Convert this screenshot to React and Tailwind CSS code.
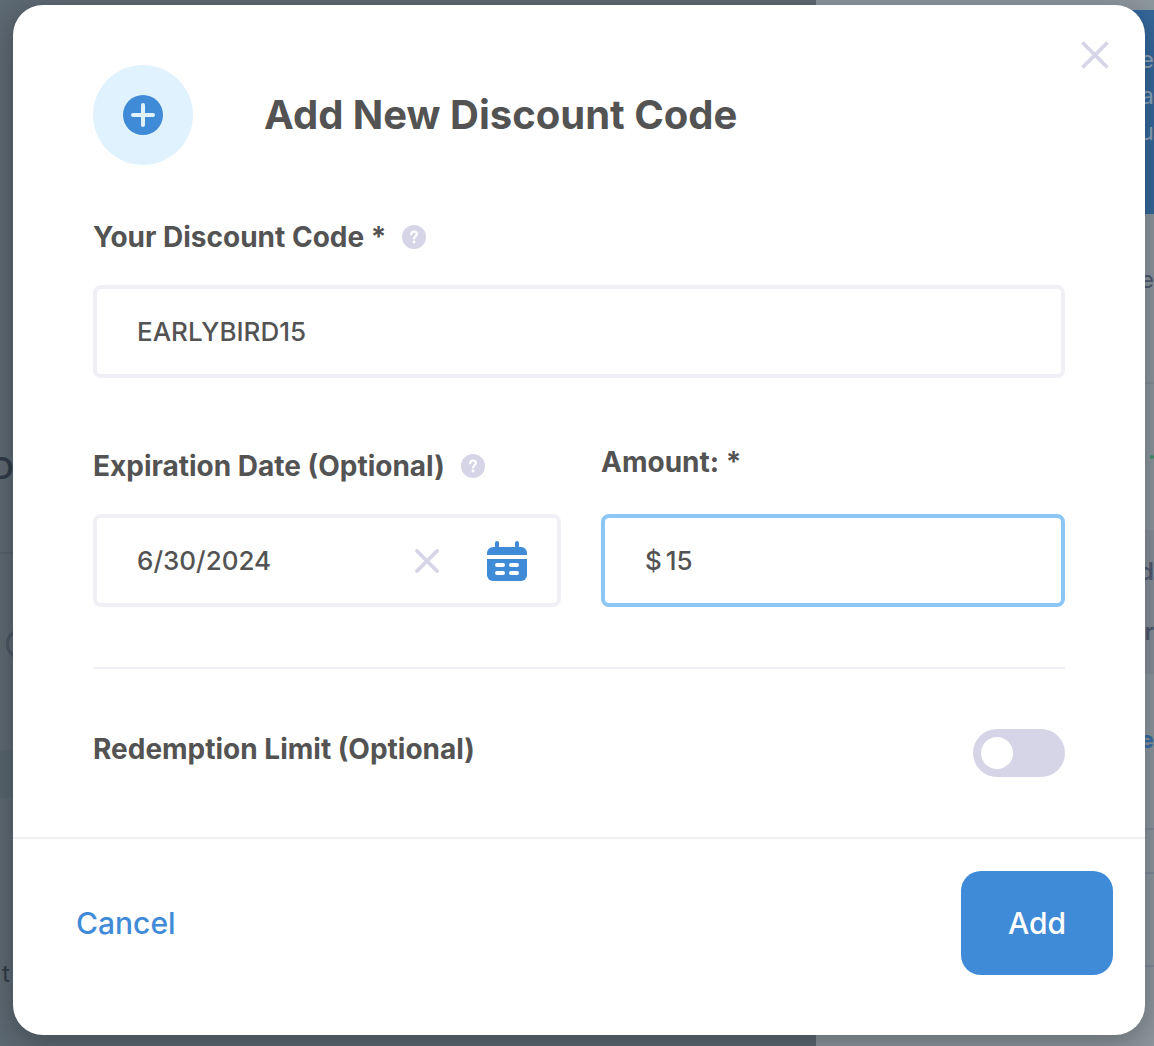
import React, { useState } from "react";

function HelpIcon({ label }) {
  return (
    <button type="button" aria-label={label} className="flex shrink-0 cursor-pointer">
      <svg width="24" height="24" viewBox="0 0 24 24" fill="none">
        <circle cx="12" cy="12" r="12" fill="#d5d5e7" />
        <path
          d="M9.2 9.2C9.400 7.400 10.500 6.500 12 6.500c1.700 0 2.900 1 2.900 2.600 0 2-2.800 2.300-2.800 4.400"
          stroke="#fff"
          strokeWidth="2.200"
          strokeLinecap="round"
        />
        <circle cx="12" cy="17" r="1.400" fill="#fff" />
      </svg>
    </button>
  );
}

function PlusIcon() {
  return (
    <svg width="40" height="40" viewBox="0 0 40 40">
      <circle cx="20" cy="20" r="20" fill="#3f8bd8" />
      <path d="M20 10v20M10 20h20" stroke="#e1f2ff" strokeWidth="4" strokeLinecap="round" />
    </svg>
  );
}

function CalendarIcon() {
  return (
    <svg width="40" height="40" viewBox="0 0 40 40">
      <path d="M10 2v6M30 2v6" stroke="#3f8bd8" strokeWidth="4" strokeLinecap="round" />
      <path d="M6 6h28a6 6 0 0 1 6 6v2H0v-2a6 6 0 0 1 6-6z" fill="#3f8bd8" />
      <path d="M0 18h40v16a6 6 0 0 1-6 6H6a6 6 0 0 1-6-6z" fill="#3f8bd8" />
      <path
        d="M10 24h6M24 24h6M10 32h6M24 32h6"
        stroke="#fff"
        strokeWidth="4"
        strokeLinecap="round"
      />
    </svg>
  );
}

function PageBehind() {
  return (
    <div
      aria-hidden="true"
      className="grid min-h-screen grid-cols-[816fr_338fr] overflow-hidden text-2xl"
    >
      <div className="flex flex-col bg-[#5d6973] text-[#303c49]">
        <div className="h-[452px]" />
        <div className="-ml-2 h-[100px] text-3xl leading-8 font-semibold">D</div>
        <div className="h-[76px] border-t-2 border-[#56616c]" />
        <div className="ml-1.5 size-8 rounded-full border-3 border-[#4a5763]" />
        <div className="mt-[90px] h-12 bg-[#59666f]" />
        <div className="mt-40 ml-0.5 leading-8">t</div>
      </div>
      <div className="flex flex-col bg-[#8d979e] text-[#505a70]">
        <div className="mt-2.5 h-[204px] bg-[#35689c] pt-8 text-right leading-9 text-[#8da3b8]">
          <p>e</p>
          <p>ra</p>
          <p>u</p>
        </div>
        <p className="h-[168px] pt-12 text-right leading-9">e</p>
        <div className="flex h-[148px] items-center justify-end border-t-2 border-[#858e99]">
          <span className="h-1 w-1 rounded-full bg-[#40936a]" />
        </div>
        <div className="h-36 bg-[#888f9a] pt-6 text-right leading-9 font-semibold">
          <p>d</p>
          <p className="mt-6">r</p>
        </div>
        <p className="h-[154px] pt-12 text-right leading-9 font-bold text-[#3a6fa5]">e</p>
        <div className="h-11 border-t-2 border-[#7f8b99]" />
        <div className="h-[93px] border-t-2 border-[#7f8b99]" />
        <div className="border-t-2 border-[#7f8b99]" />
      </div>
    </div>
  );
}

export default function App() {
  const [code, setCode] = useState("EARLYBIRD15");
  const [date, setDate] = useState("6/30/2024");
  const [amount, setAmount] = useState("15");
  const [limited, setLimited] = useState(false);

  return (
    <div className="relative font-['Inter',sans-serif] text-[#535353]">
      <PageBehind />
      <div className="absolute inset-0 pt-[5px] pr-[9px] pb-[11px] pl-[13px]">
        <form
          role="dialog"
          aria-labelledby="dialog-title"
          onSubmit={(e) => e.preventDefault()}
          className="relative rounded-[30px] bg-white shadow-[0_8px_32px_rgba(0,0,0,0.3)]"
        >
          <button
            type="button"
            aria-label="Close"
            className="absolute top-9 right-9 cursor-pointer"
          >
            <svg width="28" height="28" viewBox="0 0 28 28">
              <path d="M1.500 1.500l25 25M26.500 1.500l-25 25" stroke="#d5d5e7" strokeWidth="3.800" />
            </svg>
          </button>

          <div className="px-20 pt-15 pb-15">
            <div className="flex items-center gap-[71px]">
              <div className="flex size-25 shrink-0 items-center justify-center rounded-full bg-[#e1f2ff]">
                <PlusIcon />
              </div>
              <h1 id="dialog-title" className="text-[40px] leading-12 font-bold">
                Add New Discount Code
              </h1>
            </div>

            <div className="mt-14 flex h-8 items-center gap-4 text-[28px] leading-8 font-bold">
              <label htmlFor="code">Your Discount Code *</label>
              <HelpIcon label="About discount codes" />
            </div>
            <input
              id="code"
              type="text"
              value={code}
              onChange={(e) => setCode(e.target.value)}
              className="mt-8 block h-[93px] w-full rounded-lg border-4 border-[#efeff5] px-10 text-[26px] font-medium outline-none"
            />

            <div className="mt-18 grid grid-cols-[468fr_464fr] gap-10">
              <div>
                <div className="flex h-8 items-center gap-4 text-[28px] leading-8 font-bold">
                  <label htmlFor="date">Expiration Date (Optional)</label>
                  <HelpIcon label="About expiration dates" />
                </div>
                <div className="mt-8 flex h-[93px] items-center rounded-lg border-4 border-[#efeff5] pr-[30px] pl-10">
                  <input
                    id="date"
                    type="text"
                    value={date}
                    onChange={(e) => setDate(e.target.value)}
                    className="w-full min-w-0 text-[26px] font-medium outline-none"
                  />
                  <button
                    type="button"
                    aria-label="Clear date"
                    onClick={() => setDate("")}
                    className="mr-12 shrink-0 cursor-pointer"
                  >
                    <svg width="24" height="24" viewBox="0 0 24 24">
                      <path
                        d="M2 2l20 20M22 2L2 22"
                        stroke="#d5d5e7"
                        strokeWidth="3.800"
                        strokeLinecap="round"
                      />
                    </svg>
                  </button>
                  <button type="button" aria-label="Open calendar" className="shrink-0 cursor-pointer">
                    <CalendarIcon />
                  </button>
                </div>
              </div>

              <div>
                <div className="h-8 text-[28px] leading-6 font-bold">
                  <label htmlFor="amount">Amount: *</label>
                </div>
                <div className="mt-8 flex h-[93px] items-center gap-1 rounded-lg border-4 border-[#8cc6f4] px-10 text-[26px] font-medium">
                  <span>$</span>
                  <input
                    id="amount"
                    type="text"
                    value={amount}
                    onChange={(e) => setAmount(e.target.value)}
                    className="w-full min-w-0 outline-none"
                  />
                </div>
              </div>
            </div>

            <hr className="mt-15 border-t-2 border-[#f1f1f5]" />

            <div className="mt-15 flex items-start justify-between">
              <label htmlFor="limit" className="text-[28px] leading-10 font-bold">
                Redemption Limit (Optional)
              </label>
              <input
                id="limit"
                type="checkbox"
                role="switch"
                checked={limited}
                onChange={(e) => setLimited(e.target.checked)}
                className="flex h-12 w-23 shrink-0 cursor-pointer appearance-none items-center rounded-full bg-[#d5d5e7] px-2 before:size-8 before:rounded-full before:bg-white checked:justify-end checked:bg-[#3f8bd8]"
              />
            </div>
          </div>

          <div className="flex items-center justify-between border-t-2 border-[#eeeff5] pt-8 pr-8 pb-15 pl-[63px] text-[30px] font-medium">
            <button type="button" className="cursor-pointer text-[#3f8bd8]">
              Cancel
            </button>
            <button
              type="submit"
              className="h-26 w-38 cursor-pointer rounded-[20px] bg-[#3f8bd8] text-white"
            >
              Add
            </button>
          </div>
        </form>
      </div>
    </div>
  );
}
